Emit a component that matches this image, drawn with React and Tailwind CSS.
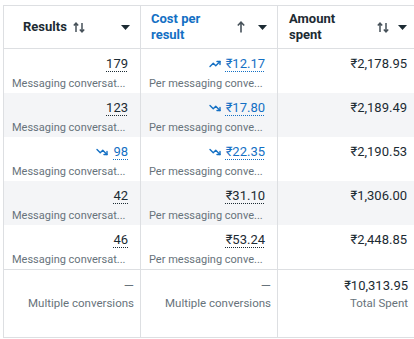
import { TrendingUp, TrendingDown } from "lucide-react";

const rows = [
  { results: "179", cost: "₹12.17", trend: "up", spent: "₹2,178.95" },
  { results: "123", cost: "₹17.80", trend: "down", spent: "₹2,189.49" },
  { results: "98", resultsTrend: "down", cost: "₹22.35", trend: "down", spent: "₹2,190.53" },
  { results: "42", cost: "₹31.10", spent: "₹1,306.00" },
  { results: "46", cost: "₹53.24", spent: "₹2,448.85" },
];

function Caret() {
  return (
    <svg width="9" height="5" viewBox="0 0 9 5" className="shrink-0">
      <path d="M0 0h9L4.5 5z" fill="#1c2b33" />
    </svg>
  );
}

function SortBoth() {
  return (
    <svg width="12" height="11" viewBox="0 0 12 11" className="shrink-0">
      <path d="M3 10V1.5M0.8 3.6L3 1.2l2.2 2.4" stroke="#47525a" strokeWidth="1.5" fill="none" />
      <path d="M9 1v8.5M6.8 7.4L9 9.8l2.2-2.4" stroke="#47525a" strokeWidth="1.5" fill="none" />
    </svg>
  );
}

function SortUp() {
  return (
    <svg width="8" height="12" viewBox="0 0 8 12" className="shrink-0">
      <path d="M4 11.5V1.5M0.8 4.5L4 1.2l3.2 3.3" stroke="#47525a" strokeWidth="1.6" fill="none" />
    </svg>
  );
}

function Value({ children, trend, blue }) {
  return (
    <div className="flex items-center justify-end gap-[5px] h-[18px]">
      {trend === "up" && <TrendingUp size={12} strokeWidth={2.8} className="text-[#1470c4]" />}
      {trend === "down" && <TrendingDown size={12} strokeWidth={2.8} className="text-[#1470c4]" />}
      <span
        className={
          "underline decoration-dotted underline-offset-[3px] decoration-1 " +
          (blue ? "text-[#1470c4]" : "text-[#1c2b33]")
        }
      >
        {children}
      </span>
    </div>
  );
}

export default function App() {
  return (
    <div
      className="w-[414px] h-[339px] bg-white overflow-hidden pt-[5px] pl-[3px]"
      style={{ fontFamily: "Roboto, 'Noto Sans', sans-serif" }}
    >
      <div className="border-t border-l border-b border-[#dddfe2] w-[420px]">
        <div className="grid grid-cols-[137px_137px_146px] h-[43px] border-b border-[#dddfe2] text-[13px] font-bold leading-[16px]">
          <div className="flex items-center pl-[19px] pr-[10px] border-r border-[#dddfe2]">
            <span className="text-[#1c2b33]">Results</span>
            <span className="ml-[6px]">
              <SortBoth />
            </span>
            <span className="ml-auto">
              <Caret />
            </span>
          </div>
          <div className="flex items-center pl-[10px] pr-[10px] border-r border-[#dddfe2]">
            <span className="text-[#1470c4] w-[60px]">Cost per result</span>
            <span className="ml-auto mr-[13px]">
              <SortUp />
            </span>
            <Caret />
          </div>
          <div className="flex items-center pl-[11px] pr-[17px]">
            <span className="text-[#1c2b33] w-[60px]">Amount spent</span>
            <span className="ml-auto mr-[9px]">
              <SortBoth />
            </span>
            <Caret />
          </div>
        </div>

        {rows.map((r, i) => (
          <div
            key={i}
            className={
              "grid grid-cols-[137px_137px_146px] h-[44px] text-[13px] leading-[18px] " +
              (i % 2 === 1 ? "bg-[#f4f5f7]" : "bg-white")
            }
          >
            <div className="pt-[6px] pl-[8px] pr-[12px] border-r border-[#dddfe2]">
              <Value trend={r.resultsTrend} blue={!!r.resultsTrend}>
                {r.results}
              </Value>
              <div className="mt-[3px] text-[11px] leading-[16px] text-[#67737b] whitespace-nowrap">
                Messaging conversat...
              </div>
            </div>
            <div className="pt-[6px] pl-[8px] pr-[12px] border-r border-[#dddfe2]">
              <Value trend={r.trend} blue={!!r.trend}>
                {r.cost}
              </Value>
              <div className="mt-[3px] text-[11px] leading-[16px] text-[#67737b] whitespace-nowrap">
                Per messaging conve...
              </div>
            </div>
            <div className="pt-[6px] pl-[9px] text-[#1c2b33]">
              <div className="w-[120px] text-right">{r.spent}</div>
            </div>
          </div>
        ))}

        <div className="grid grid-cols-[137px_137px_146px] h-[68px] border-t border-[#dddfe2] text-[13px] leading-[18px]">
          <div className="pt-[7px] pl-[6px] pr-[6px] border-r border-[#dddfe2] text-right">
            <div className="text-[#67737b]">—</div>
            <div className="text-[11.5px] leading-[16px] text-[#67737b]">Multiple conversions</div>
          </div>
          <div className="pt-[7px] pl-[6px] pr-[6px] border-r border-[#dddfe2] text-right">
            <div className="text-[#67737b]">—</div>
            <div className="text-[11.5px] leading-[16px] text-[#67737b]">Multiple conversions</div>
          </div>
          <div className="pt-[7px] pl-[9px] text-right">
            <div className="w-[121px] text-[#1c2b33]">₹10,313.95</div>
            <div className="w-[121px] text-[11.5px] leading-[16px] text-[#67737b]">Total Spent</div>
          </div>
        </div>
      </div>
    </div>
  );
}
